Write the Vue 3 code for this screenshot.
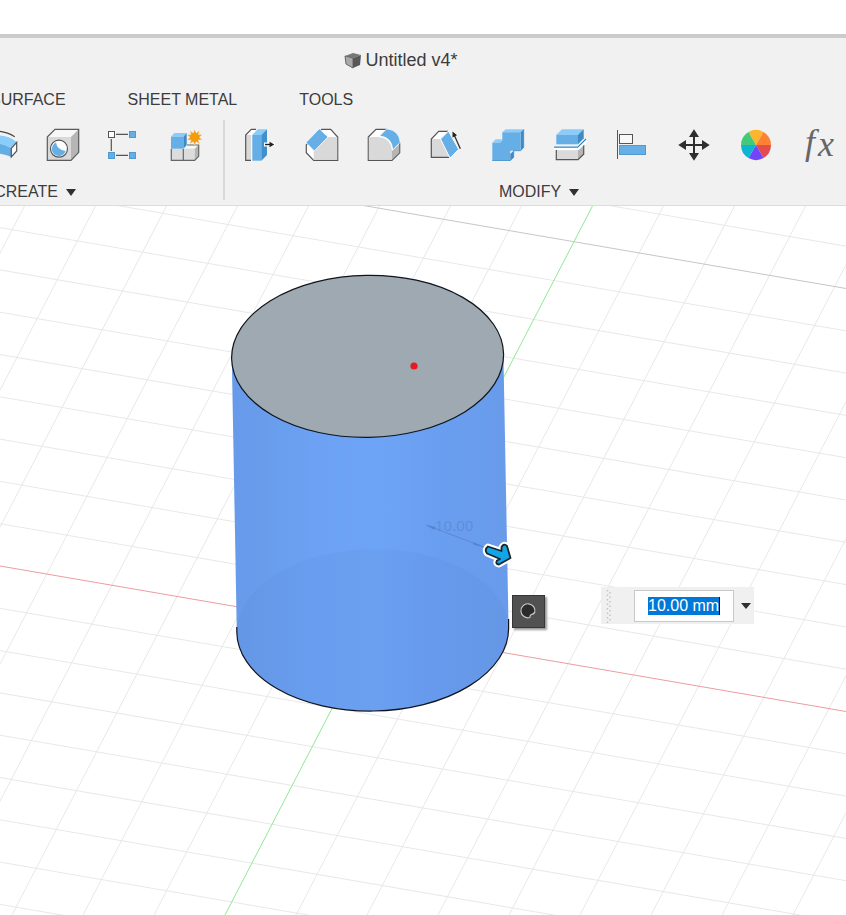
<script setup>
import { onMounted, ref } from 'vue'

const distance = ref('10.00 mm')
const distanceInput = ref(null)

// Sketch plane grid: two families of parallel lines
const rows = []
for (let k = -19; k <= 20; k++) {
  if (k === 0 || k === -10) continue
  const y = 566 + k * 42.3
  rows.push({ k, y1: y, y2: y + 145.5 })
}
const columns = []
for (let k = -9; k <= 9; k++) {
  if (k !== 0) columns.push({ k, x1: 593 + k * 71, x2: 225 + k * 71 })
}

const wedges = ['#fdb52e', '#ff8132', '#e44b4f', '#7146fb', '#0fb5d0', '#43c978'].map((color, i) => {
  const point = (deg) => {
    const a = (deg * Math.PI) / 180
    return `${(15 * Math.cos(a)).toFixed(2)} ${(15 * Math.sin(a)).toFixed(2)}`
  }
  const start = -120 + i * 60
  return { color, d: `M0 0L${point(start)}A15 15 0 0 1 ${point(start + 60)}Z` }
})

const star = Array.from({ length: 20 }, (_, i) => {
  const r = i % 2 ? 4.6 : 8
  const a = (i * Math.PI) / 10
  return `${(8.7 + r * Math.sin(a)).toFixed(2)},${(-7.7 - r * Math.cos(a)).toFixed(2)}`
}).join(' ')

onMounted(() => {
  distanceInput.value.focus({ preventScroll: true })
  distanceInput.value.select()
})
</script>

<template>
  <div class="app">
    <header class="header">
      <h1 class="title">
        <svg class="doc-icon" viewBox="0 0 18 18" aria-hidden="true">
          <path d="M1 4L9 1L17 3L9 6Z" fill="#777" />
          <path d="M1 4L9 6V16L2 12Z" fill="#aaa" stroke="#666" stroke-width="1" />
          <path d="M9 6L17 3L16 13L9 16Z" fill="#585858" />
        </svg>
        Untitled v4*
      </h1>

      <nav class="tabs">
        <button type="button">SURFACE</button>
        <button type="button">SHEET METAL</button>
        <button type="button">TOOLS</button>
      </nav>

      <div class="toolbar">
        <section class="group create">
          <div class="tools">
            <button type="button" aria-label="Pipe">
              <svg viewBox="-20 -20 40 40">
                <path d="M-15 -12Q1 -17 14.700 -8.300" fill="none" stroke="#444" stroke-width="1.200" />
                <path d="M-15 -8Q6 -13 16.700 -2.700L11.300 3.300Q0 -4 -15 -1Z" fill="#8accfa" />
                <path d="M-15 -1Q0 -4 11.300 3.300V12Q0 7 -15 9Z" fill="#62ade3" />
                <path d="M11.300 3.300L16.700 -2.700V6L11.300 12Z" fill="#fff" stroke="#555" stroke-width="1.200" />
              </svg>
            </button>
            <button type="button" aria-label="Hole">
              <svg viewBox="-20 -20 40 40">
                <path d="M-14.700 -8L-7 -15.700H16.700L9 -8Z" fill="#f7f7f7" />
                <path d="M-14.700 -8H9V15.300H-14.700Z" fill="#d9d9d9" />
                <path d="M9 -8L16.700 -15.700V7.300L9 15.300Z" fill="#b5b5b5" />
                <path d="M-14.700 -8L-7 -15.700H16.700V7.300L9 15.300H-14.700Z" fill="none" stroke="#5a5a5a" stroke-width="1.200" />
                <circle cx="-3" cy="3.700" r="8.500" fill="#fff" stroke="#555" stroke-width="1.200" />
                <path d="M-6 -2.400Q-5 5 3.600 6A7 7 0 1 1 -6 -2.400Z" fill="#65afe3" />
              </svg>
            </button>
            <button type="button" aria-label="Rectangular pattern">
              <svg viewBox="-20 -20 40 40">
                <path d="M-8 -10.700H4M-12.700 -6V6M-8 10.300H4" stroke="#555" stroke-width="1.200" />
                <rect x="-15.500" y="-13.500" width="6" height="6" fill="#fff" stroke="#555" />
                <g fill="#65afe6" stroke="#5299ce" stroke-width="1">
                  <rect x="5.500" y="-13.500" width="6" height="6" />
                  <rect x="-15.500" y="7.500" width="6" height="6" />
                  <rect x="5.500" y="7.500" width="6" height="6" />
                </g>
              </svg>
            </button>
            <button type="button" aria-label="New component">
              <svg viewBox="-20 -20 40 40">
                <path d="M-2.500 3.700L1 0H12.700L8.700 3.700Z" fill="#f7f7f7" />
                <path d="M-14.700 3.700H8.700V15.300H-14.700Z" fill="#dcdcdc" />
                <path d="M8.700 3.700L12.700 0V11.300L8.700 15.300Z" fill="#b5b5b5" />
                <path d="M1 0H12.700V11.300L8.700 15.300H-14.700V3.700M-2.700 4V15" fill="none" stroke="#666" stroke-width="1.200" />
                <path d="M-15 -8.300L-11.700 -12H.7L-2.500 -8.300Z" fill="#8accfa" />
                <path d="M-15 -8.300H-2.500V3.700H-15Z" fill="#65afe6" />
                <path d="M-2.500 -8.300L.7 -12V0L-2.500 3.700Z" fill="#3f8ac4" />
                <polygon :points="star" fill="#f59c0b" stroke="#f1f1f1" stroke-width=".4" />
              </svg>
            </button>
          </div>
          <button type="button" class="group-label">CREATE<i class="caret"></i></button>
        </section>

        <div class="separator"></div>

        <section class="group">
          <div class="tools">
            <button type="button" aria-label="Press pull">
              <svg viewBox="-20 -20 40 40">
                <path d="M-14.300 -10L-8.700 -15.700H-3L-8 -10Z" fill="#fff" />
                <path d="M-14.300 -10H-8.500V15.300H-14.300Z" fill="#d9d9d9" />
                <path d="M-9 15.300H-14.300V-10L-8.700 -15.700H-4" fill="none" stroke="#555" stroke-width="1.200" />
                <path d="M-8.200 -10V16" stroke="#fff" />
                <path d="M-7.700 -10L-2.300 -15.700H7L1.300 -10Z" fill="#8accfa" />
                <path d="M-7.700 -10H1.300V15.700H-7.700Z" fill="#65afe6" />
                <path d="M1.300 -10L7 -15.700V10L1.300 15.700Z" fill="#4290cb" />
                <path d="M4 -.5H15" stroke="#fff" stroke-width="4" />
                <path d="M5 -.5H11" stroke="#222" stroke-width="1.400" />
                <path d="M9.500 -3.300L14.300 -.5L9.500 2.300Z" fill="#222" />
              </svg>
            </button>
            <button type="button" aria-label="Chamfer">
              <svg viewBox="-20 -20 40 40">
                <path d="M-15.700 0L-.3 -15.700H8.700L15.700 -8V15.300H-8.300L-15.700 7.700Z" fill="#fff" stroke="#555" stroke-width="1.200" />
                <path d="M-8.300 6L5.700 -8H15.200V14.800H-8.300Z" fill="#d9d9d9" />
                <path d="M-16 -2.500L-2.700 -16.300L6 -8L-7.700 6Z" fill="#65afe6" stroke="#fff" stroke-width=".8" />
              </svg>
            </button>
            <button type="button" aria-label="Fillet">
              <svg viewBox="-20 -20 40 40">
                <path d="M-15.700 -8L-8 -15.700H1A15 15 0 0 1 15.700 0V7.700L8 15.300H-15.700Z" fill="#fff" stroke="#555" stroke-width="1.200" />
                <path d="M8 6L15.200 -1V7.500L8 14.800Z" fill="#b5b5b5" />
                <path d="M-15.200 -8H-5.700Q7 -7 8 6V14.800H-15.200Z" fill="#d9d9d9" />
                <path d="M-4.500 -9L2.700 -16.200Q15 -15 16.300 -2.700L8.700 5Q8 -8 -4.500 -9Z" fill="#65afe6" stroke="#fff" stroke-width=".8" />
              </svg>
            </button>
            <button type="button" aria-label="Draft">
              <svg viewBox="-20 -20 40 40">
                <path d="M-14.700 -6L-7.300 -13.700H2L-5.300 -6Z" fill="#fff" />
                <path d="M-14.700 -6H-5.300L3.300 12.300H-14.700Z" fill="#d9d9d9" />
                <path d="M2 -13.700H-7.300L-14.700 -6V12.300H4" fill="none" stroke="#555" stroke-width="1.200" />
                <path d="M-5.500 -6L2.500 -14L12.700 4.300L4 13.200Z" fill="#65afe6" stroke="#fff" stroke-width="1" />
                <path d="M14.300 3.700L8 -10.500" stroke="#333" stroke-width="1.300" />
                <path d="M6.500 -13.500L11 -9.700L6.500 -7.500Z" fill="#222" />
              </svg>
            </button>
            <button type="button" aria-label="Combine">
              <svg viewBox="-20 -20 40 40">
                <path d="M-5.700 -12.700L-2.300 -15.700H15.700L12.700 -12.700Z" fill="#8accfa" />
                <path d="M12.700 -12.700L15.700 -15.700V2.300L12.700 5.700Z" fill="#3f8ac4" />
                <path d="M-15.700 -2.300L-12.300 -5.700H-5.700L-8 -2.300Z" fill="#8accfa" />
                <path d="M-5.700 -12.700H12.700V5.700H2.300V15.700H-15.700V-2.300H-8L-5.700 -5Z" fill="#65afe6" />
                <path d="M2.300 9L5.700 5.700V12.300L2.300 15.700Z" fill="#3f8ac4" />
                <path d="M-15.700 15.500H2.300L5.700 12.300V5.700H12.700L15.700 2.300V-15.700" fill="none" stroke="#3f8ac4" stroke-width=".7" />
              </svg>
            </button>
            <button type="button" aria-label="Split body">
              <svg viewBox="-20 -20 40 40">
                <path d="M-13.700 5.300H8V14.700H-13.700Z" fill="#dadada" />
                <path d="M8 5.300L13.700 0V9.300L8 14.700Z" fill="#b5b5b5" />
                <path d="M-13.700 5V14.700H8L13.700 9.300V0" fill="none" stroke="#555" stroke-width="1.200" />
                <path d="M-16 3H8L16 -5" fill="none" stroke="#fff" stroke-width="4" />
                <path d="M-16 2.200H7.700L16 -6" fill="none" stroke="#2d87bd" stroke-width="1.200" />
                <path d="M-13.700 -10.300L-8 -15.700H13.700L8 -10.300Z" fill="#8accfa" />
                <path d="M-13.700 -10.300H8V-.7H-13.700Z" fill="#65afe6" />
                <path d="M8 -10.300L13.700 -15.700V-6.700L8 -.7Z" fill="#3f8ac4" />
              </svg>
            </button>
            <button type="button" aria-label="Align">
              <svg viewBox="-20 -20 40 40">
                <path d="M-14.500 -15V14" stroke="#555" />
                <rect x="-12.500" y="-10.500" width="13" height="9" fill="#f8f8f8" stroke="#555" />
                <rect x="-12.500" y=".5" width="26" height="9" fill="#65afe6" stroke="#5299ce" />
              </svg>
            </button>
            <button type="button" aria-label="Move">
              <svg viewBox="-20 -20 40 40">
                <path d="M-11 0H11M0 -11V11" stroke="#2e2e2e" stroke-width="2" />
                <path d="M-15.700 0L-8 -5V5ZM15.700 0L8 -5V5ZM0 -15.700L-5 -8H5ZM0 15.700L-5 8H5Z" fill="#2e2e2e" />
              </svg>
            </button>
            <button type="button" aria-label="Appearance">
              <svg viewBox="-20 -20 40 40">
                <path v-for="w in wedges" :key="w.color" :d="w.d" :fill="w.color" />
              </svg>
            </button>
            <button type="button" aria-label="Change parameters">
              <svg viewBox="-20 -20 40 40">
                <text class="fx"><tspan x="-13" y="9">f</tspan><tspan x="0" y="11">x</tspan></text>
              </svg>
            </button>
          </div>
          <button type="button" class="group-label">MODIFY<i class="caret"></i></button>
        </section>
      </div>
    </header>

    <main class="scene">
      <svg class="viewport" viewBox="0 206 846 709" preserveAspectRatio="xMidYMin slice" role="img" aria-label="Cylinder preview">
        <defs>
          <linearGradient id="side" gradientUnits="userSpaceOnUse" x1="232" x2="509" y1="0" y2="0">
            <stop offset="0" stop-color="#679aea" />
            <stop offset=".12" stop-color="#699dec" />
            <stop offset=".3" stop-color="#6ca1f3" />
            <stop offset=".52" stop-color="#6ea4f6" />
            <stop offset=".72" stop-color="#6a9ef0" />
            <stop offset="1" stop-color="#689bea" />
          </linearGradient>
        </defs>

        <g stroke="#e8e8e8" stroke-width="1">
          <line v-for="r in rows" :key="'r' + r.k" x1="0" :y1="r.y1" x2="846" :y2="r.y2" />
          <line v-for="c in columns" :key="'c' + c.k" :x1="c.x1" y1="205" :x2="c.x2" y2="915" />
        </g>
        <path d="M0 143L846 288.500" stroke="#c6c6c6" />
        <path d="M0 566L846 711.500" stroke="#ee9ba1" />
        <path d="M593 205L225 915" stroke="#8fe993" />

        <path d="M231.800 358L236.800 632A135 80.500 -1 0 0 508.600 628L503.400 355Z" fill="url(#side)" />
        <ellipse cx="372.700" cy="630" rx="135.700" ry="80.800" transform="rotate(-1 372.700 630)" fill="#4979c4" fill-opacity=".08" />
        <path d="M236.800 627V632A135 80.500 -1 0 0 508.600 628V619" fill="none" stroke="#10151d" stroke-width="1.200" />
        <ellipse cx="367.600" cy="356.300" rx="136" ry="81" transform="rotate(-1 367.600 356.300)" fill="#9ea9b1" stroke="#10151d" stroke-width="1.200" />
        <circle cx="414" cy="366" r="3.600" fill="#e31b23" />

        <g class="dimension">
          <path d="M426 525L484 547" stroke="#4a76bd" stroke-opacity=".5" />
          <path d="M426 525L436 527L434 530ZM484 547L474 545L473 542Z" fill="#4a76bd" fill-opacity=".5" />
          <text x="435" y="531">10.00</text>
        </g>

        <g stroke-linejoin="round">
          <path d="M488 546.500L501.500 551L501.500 547Q504 543 507 546L510.500 558L499 564.500Q495 564 497 560.500L500 559L487 553.500Q484 549.500 488 546.500Z" fill="#fff" stroke="#fff" stroke-width="6" />
          <path d="M488 546.500L501.500 551L501.500 547Q504 543 507 546L510.500 558L499 564.500Q495 564 497 560.500L500 559L487 553.500Q484 549.500 488 546.500Z" fill="#12a5e8" stroke="#17262f" stroke-width="1.800" />
        </g>
      </svg>

      <button type="button" class="shape-button" aria-label="Extent">
        <svg viewBox="0 0 31 31">
          <path d="M21.700 16.500A7 7 0 1 0 16.800 21.500Q16.800 19.500 18.200 18.500Q20 18.500 21.700 16.500Z" fill="#2b2b2b" stroke="#c9c9c9" stroke-width="1.200" />
        </svg>
      </button>

      <div class="value-panel">
        <svg class="grip" viewBox="0 0 6 34" aria-hidden="true">
          <path d="M1.500 1V34" stroke="#c4c4c4" stroke-width="1.500" stroke-dasharray="1.500 3" />
          <path d="M4 3V34" stroke="#c4c4c4" stroke-width="1.500" stroke-dasharray="1.500 3" />
        </svg>
        <div class="field">
          <input ref="distanceInput" v-model="distance" type="text" aria-label="Distance" />
          <span class="text-cursor"></span>
        </div>
        <button type="button" class="more" aria-label="Distance options"><i class="caret small"></i></button>
      </div>
    </main>
  </div>
</template>

<style>
body {
  margin: 0;
  overflow-x: hidden;
}
</style>

<style scoped>
.app {
  display: flex;
  flex-direction: column;
  min-height: 100vh;
  overflow: hidden;
  background: #fff;
  color: #3c3c3c;
  font-family: "Liberation Sans", Arial, sans-serif;
  font-size: 16px;
}
button {
  flex: none;
  margin: 0;
  padding: 0;
  border: 0;
  background: none;
  color: inherit;
  font: inherit;
  line-height: 20px;
  white-space: nowrap;
}
.header {
  margin-top: 34px;
  border-top: 4px solid #cbcbcb;
  border-bottom: 1px solid #dcdcdc;
  background: #f1f1f1;
}
.title {
  display: flex;
  align-items: center;
  justify-content: center;
  gap: 3px;
  height: 45px;
  margin: 0;
  padding-right: 44px;
  font-size: 18px;
  font-weight: 400;
}
.doc-icon {
  width: 18px;
  height: 18px;
}
.tabs {
  display: flex;
  align-items: center;
  gap: 62px;
  height: 34px;
  margin-left: -10px;
}
.toolbar {
  display: flex;
  height: 88px;
}
.group {
  display: flex;
  flex: none;
  flex-direction: column;
  align-items: center;
}
.create {
  margin-left: -147px;
}
.create .tools {
  padding-left: 116px;
}
.tools {
  display: flex;
  padding: 8px 0;
}
.tools button {
  display: grid;
  place-items: center;
  width: 62px;
  height: 40px;
}
.tools svg {
  width: 40px;
  height: 40px;
  overflow: visible;
}
.fx {
  fill: #666;
  font-family: "Liberation Serif", "Times New Roman", serif;
  font-size: 36px;
  font-style: italic;
}
.group-label {
  display: flex;
  align-items: center;
  gap: 8px;
  padding-top: 9px;
}
.caret {
  width: 0;
  height: 0;
  border: 5px solid transparent;
  border-top: 7px solid #303030;
  border-bottom: 0;
}
.separator {
  flex: none;
  width: 2px;
  margin: 3px 4px 5px 6px;
  background: #dadada;
}
.scene {
  position: relative;
  flex: 1;
  min-height: 709px;
}
.viewport {
  position: absolute;
  width: 100%;
  height: 100%;
}
.dimension text {
  fill: #4a76bd;
  fill-opacity: 0.4;
  font-family: "Noto Sans", sans-serif;
  font-size: 15px;
}
.shape-button {
  position: absolute;
  top: 389px;
  left: 512px;
  width: 33px;
  height: 33px;
  border: 1px solid #363636;
  background: #515151;
  box-shadow: 2px 2px 2px #999;
}
.shape-button svg {
  display: block;
}
.value-panel {
  position: absolute;
  top: 381px;
  left: 601px;
  display: flex;
  align-items: center;
  width: 153px;
  height: 37px;
  background: #f0f0f0;
}
.grip {
  width: 6px;
  height: 34px;
  margin: 0 22px 0 5px;
}
.field {
  position: relative;
  width: 100px;
}
.field input {
  display: block;
  box-sizing: border-box;
  width: 100%;
  height: 32px;
  padding: 0 13px;
  border: 1px solid #c8c8c8;
  border-radius: 0;
  outline: 0;
  background: #fff;
  color: #222;
  font: 16px "Liberation Sans", Arial, sans-serif;
}
.field input::selection {
  background: #0078d7;
  color: #fff;
}
.text-cursor {
  position: absolute;
  top: 7px;
  left: 85px;
  width: 1px;
  height: 18px;
  background: #111;
}
.more {
  display: grid;
  flex: 1;
  place-items: center;
  height: 32px;
  padding-left: 4px;
}
.small {
  border-top-width: 6px;
}
</style>
